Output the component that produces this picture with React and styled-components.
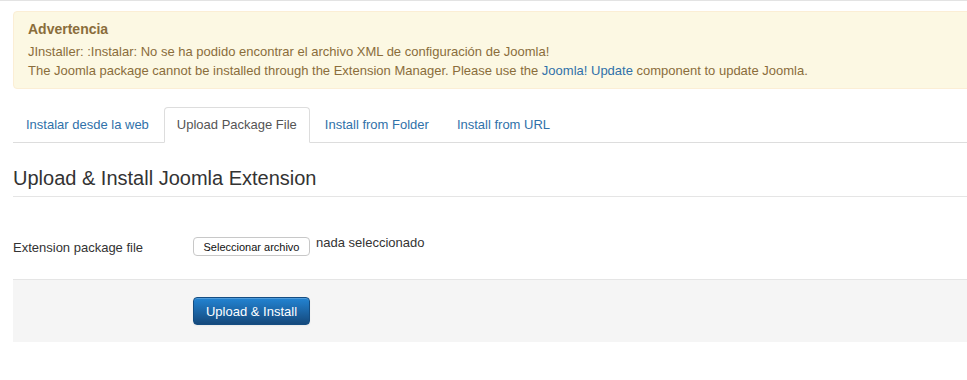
import React from 'react';
import styled, { createGlobalStyle } from 'styled-components';

const GlobalStyle = createGlobalStyle`
  html, body {
    margin: 0;
    padding: 0;
    background: #fff;
    overflow: hidden;
  }
  body {
    font-family: "Liberation Sans", Arial, Helvetica, sans-serif;
    font-size: 13px;
    color: #333;
  }
`;

const Page = styled.div`
  border-top: 1px solid #e3e3e3;
  padding: 10px 0 0 13px;
`;

const Content = styled.div`
  margin-right: -40px;
`;

const Alert = styled.div`
  background: #fcf8e3;
  border: 1px solid #fbeed5;
  border-radius: 4px;
  padding: 7px 35px 8px 14px;
  margin-bottom: 18px;
  color: #8a6d3b;
`;

const AlertHeading = styled.h4`
  margin: 0 0 3px;
  font-size: 14px;
  line-height: 20px;
  font-weight: bold;
  color: #8a6d3b;
`;

const AlertText = styled.p`
  margin: 0;
  line-height: 19px;
`;

const Link = styled.a`
  color: #3071a9;
  text-decoration: none;
`;

const Tabs = styled.ul`
  display: flex;
  list-style: none;
  margin: 0;
  padding: 0;
  border-bottom: 1px solid #ddd;
`;

const Tab = styled.li`
  margin: 0 2px -1px 0;
  padding: 8px 12px;
  line-height: 18px;
  border: 1px solid ${p => (p.$active ? '#ddd' : 'transparent')};
  border-bottom-color: ${p => (p.$active ? '#fff' : 'transparent')};
  border-radius: 4px 4px 0 0;
  background: ${p => (p.$active ? '#fff' : 'transparent')};
  color: ${p => (p.$active ? '#555' : '#3071a9')};
`;

const TabPane = styled.div`
  padding-top: 17px;
`;

const Legend = styled.h2`
  margin: 0 0 37px;
  font-size: 20px;
  font-weight: normal;
  line-height: 36px;
  color: #333;
  border-bottom: 1px solid #e5e5e5;
`;

const ControlGroup = styled.div`
  display: flex;
  align-items: flex-start;
  margin-bottom: 22px;
`;

const ControlLabel = styled.label`
  width: 180px;
  padding-top: 5px;
  line-height: 18px;
`;

const Controls = styled.div`
  display: flex;
  align-items: flex-start;
  gap: 6px;
`;

const FileButton = styled.button`
  width: 117px;
  height: 19px;
  margin-top: 3px;
  padding: 0;
  background: #fff;
  border: 1px solid #c8c8c8;
  border-radius: 4px;
  font-family: "Liberation Sans", Arial, sans-serif;
  font-size: 11px;
  color: #111;
  white-space: nowrap;
`;

const FileStatus = styled.span`
  line-height: 18px;
`;

const FormActions = styled.div`
  background: #f5f5f5;
  border-top: 1px solid #e5e5e5;
  padding: 17px 20px 17px 180px;
`;

const PrimaryButton = styled.button`
  display: block;
  width: 117px;
  height: 28px;
  padding: 0;
  border: 1px solid #144d82;
  border-radius: 4px;
  background: linear-gradient(to bottom, #2384d3, #15497c);
  color: #fff;
  font-family: "Liberation Sans", Arial, sans-serif;
  font-size: 13px;
  white-space: nowrap;
  box-shadow: inset 0 1px 0 rgba(255, 255, 255, 0.2), 0 1px 2px rgba(0, 0, 0, 0.05);
`;

export default function App() {
  return (
    <>
      <GlobalStyle />
      <Page>
        <Content>
          <Alert>
            <AlertHeading>Advertencia</AlertHeading>
            <AlertText>
              JInstaller: :Instalar: No se ha podido encontrar el archivo XML de configuración de Joomla!
            </AlertText>
            <AlertText>
              The Joomla package cannot be installed through the Extension Manager. Please use the{' '}
              <Link href="#">Joomla! Update</Link> component to update Joomla.
            </AlertText>
          </Alert>

          <Tabs>
            <Tab>Instalar desde la web</Tab>
            <Tab $active>Upload Package File</Tab>
            <Tab>Install from Folder</Tab>
            <Tab>Install from URL</Tab>
          </Tabs>

          <TabPane>
            <Legend>Upload &amp; Install Joomla Extension</Legend>
            <ControlGroup>
              <ControlLabel>Extension package file</ControlLabel>
              <Controls>
                <FileButton type="button">Seleccionar archivo</FileButton>
                <FileStatus>nada seleccionado</FileStatus>
              </Controls>
            </ControlGroup>
            <FormActions>
              <PrimaryButton type="button">Upload &amp; Install</PrimaryButton>
            </FormActions>
          </TabPane>
        </Content>
      </Page>
    </>
  );
}
